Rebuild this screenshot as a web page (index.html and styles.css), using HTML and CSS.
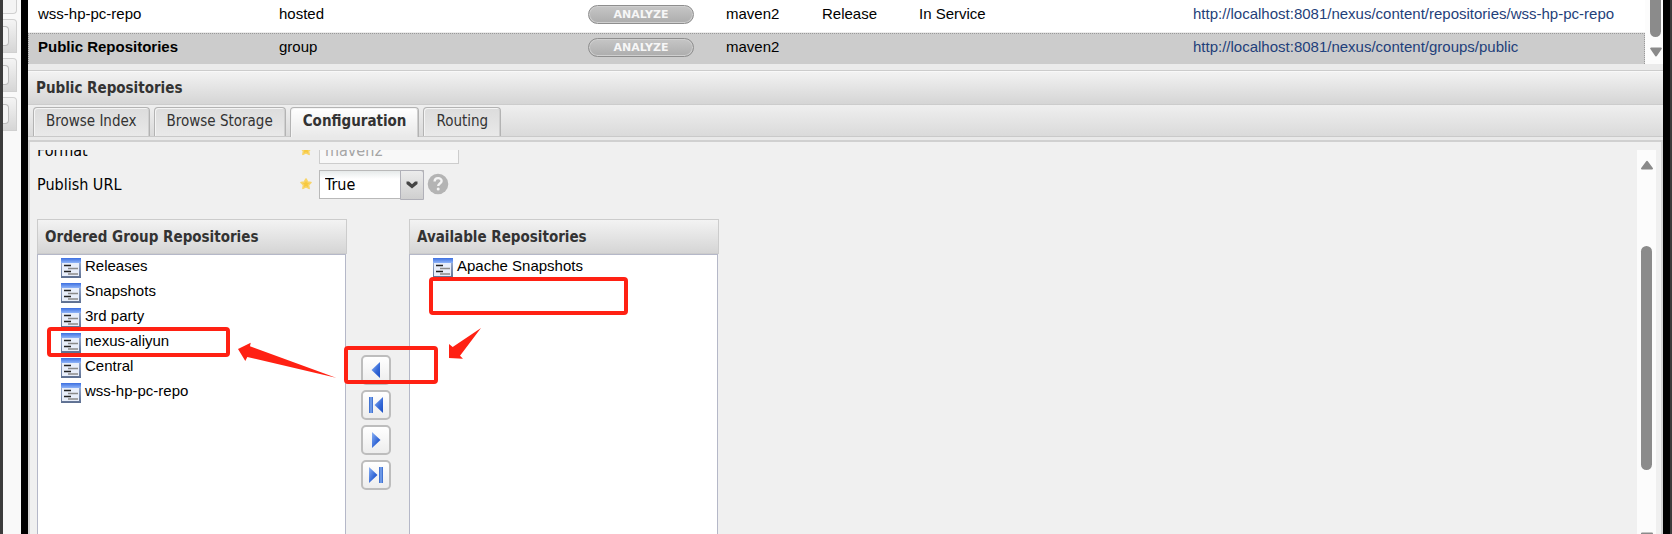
FILE: index.html
```html
<!DOCTYPE html>
<html lang="en">
<head>
    <meta charset="UTF-8">
    <meta name="viewport" content="width=device-width, initial-scale=1.0">
    <title>Nexus Repository Manager</title>
    <link rel="stylesheet" href="styles.css">
</head>
<body>

    <!-- shared icons -->
    <svg class="defs" width="0" height="0">
        <defs>
            <linearGradient id="blue" x1="0" y1="0" x2="1" y2="1">
                <stop offset="0" stop-color="#8db4f5"/>
                <stop offset="0.6" stop-color="#3367d6"/>
                <stop offset="1" stop-color="#1c4fc4"/>
            </linearGradient>
            <linearGradient id="bar" x1="0" y1="0" x2="1" y2="0">
                <stop offset="0" stop-color="#2f62c8"/>
                <stop offset="0.5" stop-color="#7fa9f0"/>
                <stop offset="1" stop-color="#2f62c8"/>
            </linearGradient>
            <linearGradient id="cap" x1="0" y1="0" x2="0" y2="1">
                <stop offset="0" stop-color="#3c6fe0"/>
                <stop offset="1" stop-color="#8fb4f8"/>
            </linearGradient>
            <linearGradient id="edge" x1="0" y1="0" x2="0" y2="1">
                <stop offset="0" stop-color="#a9bbe0"/>
                <stop offset="1" stop-color="#5d6f90"/>
            </linearGradient>
        </defs>
        <symbol id="repo" viewBox="0 0 20 20">
            <rect width="20" height="20" fill="url(#edge)"/>
            <rect x="1" y="5" width="17" height="13" fill="#e8eefa"/>
            <rect x="0" y="0" width="20" height="5" fill="url(#cap)"/>
            <path d="M3 7.5h7M3 13.5h7" stroke="#222" stroke-width="1.6"/>
            <path d="M7 10.5h10M7 16h10" stroke="#8a8a8a" stroke-width="1.4"/>
        </symbol>
        <symbol id="star" viewBox="0 0 12 12">
            <path d="M6 1l1.6 3 3.4 0.5-2.5 2.4 0.6 3.5L6 8.9l-3.1 1.5 0.6-3.5L1 4.5l3.4-0.5z" fill="#f7c93e" stroke="#f8d468" stroke-width="1.6" stroke-linejoin="round"/>
        </symbol>
    </svg>

    <div class="window">
        <aside class="sidebar">
            <div class="side-box short"></div>
            <div class="side-box"><span></span></div>
            <div class="side-box"><span></span></div>
            <div class="side-box"><span></span></div>
        </aside>

        <main class="main">
            <div class="grid">
                <table class="repos">
                    <colgroup>
                        <col class="c-name"><col class="c-type"><col class="c-health"><col class="c-format">
                        <col class="c-policy"><col class="c-status"><col>
                    </colgroup>
                    <tbody>
                        <tr>
                            <td>wss-hp-pc-repo</td>
                            <td>hosted</td>
                            <td><button type="button" class="analyze">ANALYZE</button></td>
                            <td>maven2</td>
                            <td>Release</td>
                            <td>In Service</td>
                            <td><a href="#">http://localhost:8081/nexus/content/repositories/wss-hp-pc-repo</a></td>
                        </tr>
                        <tr class="selected">
                            <td>Public Repositories</td>
                            <td>group</td>
                            <td><button type="button" class="analyze">ANALYZE</button></td>
                            <td>maven2</td>
                            <td></td>
                            <td></td>
                            <td><a href="#">http://localhost:8081/nexus/content/groups/public</a></td>
                        </tr>
                    </tbody>
                </table>
                <div class="scrollbar grid-scroll">
                    <div class="thumb"></div>
                    <svg width="12" height="10" viewBox="0 0 12 10"><path d="M1.2 1.5h9.6L6 8.5z" fill="#8a8a8a" stroke="#8a8a8a" stroke-width="2" stroke-linejoin="round"/></svg>
                </div>
            </div>

            <section class="details">
                <h1 class="panel-title">Public Repositories</h1>
                <nav class="tabs">
                    <button type="button" class="tab">Browse Index</button>
                    <button type="button" class="tab">Browse Storage</button>
                    <button type="button" class="tab active">Configuration</button>
                    <button type="button" class="tab">Routing</button>
                </nav>

                <div class="panel">
                    <form class="config">
                        <div class="field">
                            <label for="format">Format</label>
                            <svg class="star" width="12" height="12"><use href="#star"/></svg>
                            <input type="text" id="format" value="maven2" disabled>
                        </div>
                        <div class="field">
                            <label for="publish">Publish URL</label>
                            <svg class="star" width="12" height="12"><use href="#star"/></svg>
                            <div class="combo">
                                <select id="publish">
                                    <option selected>True</option>
                                    <option>False</option>
                                </select>
                                <span class="trigger">
                                    <svg width="12" height="8" viewBox="0 0 12 8"><path d="M0.5 0.5H3L6 3.2 9 0.5h2.5V3L6 7.5 0.5 3z" fill="#444"/></svg>
                                </span>
                            </div>
                            <svg class="help" width="22" height="22" viewBox="0 0 22 22">
                                <circle cx="11" cy="11" r="10.3" fill="#b4b4b4"/>
                                <path d="M7.6 8.6c0-4.6 7-4.4 7-0.6 0 2.5-3.4 2.5-3.4 5" fill="none" stroke="#f4f4f4" stroke-width="2.4"/>
                                <circle cx="11.2" cy="16" r="1.5" fill="#f4f4f4"/>
                            </svg>
                        </div>

                        <div class="picker">
                            <div class="list">
                                <h2>Ordered Group Repositories</h2>
                                <ul>
                                    <li><svg width="20" height="20"><use href="#repo"/></svg>Releases</li>
                                    <li><svg width="20" height="20"><use href="#repo"/></svg>Snapshots</li>
                                    <li><svg width="20" height="20"><use href="#repo"/></svg>3rd party</li>
                                    <li><svg width="20" height="20"><use href="#repo"/></svg>nexus-aliyun</li>
                                    <li><svg width="20" height="20"><use href="#repo"/></svg>Central</li>
                                    <li><svg width="20" height="20"><use href="#repo"/></svg>wss-hp-pc-repo</li>
                                </ul>
                            </div>
                            <div class="movers">
                                <button type="button" aria-label="Add">
                                    <svg width="16" height="16" viewBox="0 0 16 16"><path d="M12 0v16L3.5 8z" fill="url(#blue)"/></svg>
                                </button>
                                <button type="button" aria-label="Add all">
                                    <svg width="16" height="16" viewBox="0 0 16 16"><rect x="1" y="0" width="4" height="16" fill="url(#bar)"/><path d="M15 0v16L6.5 8z" fill="url(#blue)"/></svg>
                                </button>
                                <button type="button" aria-label="Remove">
                                    <svg width="16" height="16" viewBox="0 0 16 16"><path d="M4 0v16l8.5-8z" fill="url(#blue)"/></svg>
                                </button>
                                <button type="button" aria-label="Remove all">
                                    <svg width="16" height="16" viewBox="0 0 16 16"><path d="M1 0v16l8.5-8z" fill="url(#blue)"/><rect x="11" y="0" width="4" height="16" fill="url(#bar)"/></svg>
                                </button>
                            </div>
                            <div class="list">
                                <h2>Available Repositories</h2>
                                <ul>
                                    <li><svg width="20" height="20"><use href="#repo"/></svg>Apache Snapshots</li>
                                </ul>
                            </div>
                        </div>
                    </form>
                    <div class="scrollbar panel-scroll">
                        <svg width="14" height="10" viewBox="0 0 14 10"><path d="M2 8.5h10L7 1.8z" fill="#8a8a8a" stroke="#8a8a8a" stroke-width="2" stroke-linejoin="round"/></svg>
                        <div class="thumb"></div>
                        <svg width="14" height="10" viewBox="0 0 14 10"><path d="M2 1.5h10L7 8.2z" fill="#8a8a8a" stroke="#8a8a8a" stroke-width="2" stroke-linejoin="round"/></svg>
                    </div>
                </div>
            </section>
        </main>
    </div>

    <!-- red markup over the move buttons and lists -->
    <svg class="notes" width="700" height="400" viewBox="0 0 700 400">
        <g fill="none" stroke="#ff2113" stroke-width="4">
            <rect x="49" y="329" width="179" height="26" rx="2"/>
            <rect x="431" y="279" width="195" height="34" rx="2"/>
            <rect x="346" y="348" width="90" height="34" rx="2"/>
        </g>
        <g fill="#ff2113">
            <path d="M238 349L250.7 342.7 250 346.3 336 377.7 247.3 357 245.3 361z"/>
            <path d="M481 328L460 355.7 463 358.7 449 358 449 344 452.7 347z"/>
        </g>
    </svg>

</body>
</html>
```
FILE: styles.css
```css
* {
    margin: 0;
    padding: 0;
    box-sizing: border-box;
}

body {
    font-family: "Liberation Sans", Arial, sans-serif;
    font-size: 15px;
    color: #000;
    background: #3c3c3c;
    overflow: hidden;
}

.defs {
    position: absolute;
}

.window {
    display: flex;
    height: 100vh;
    padding: 0 2px 0 3px;
}

/* left navigation */
.sidebar {
    width: 18px;
    background: #f9f9f9;
    overflow: hidden;
}

.side-box {
    display: flex;
    align-items: center;
    width: 14px;
    height: 34px;
    margin-bottom: 5px;
    border: 1px solid #d0d0d0;
    border-left: none;
    border-radius: 0 4px 0 0;
    background: linear-gradient(#f4f4f4, #d6d6d6);
}

.side-box.short {
    height: 14px;
    border-top: none;
    border-radius: 0 0 4px 0;
    background: #f4f4f4;
}

.side-box span {
    width: 6px;
    height: 20px;
    border: 1px solid #bbb;
    border-left: none;
    border-radius: 0 4px 4px 0;
    background: #f4f4f4;
}

.main {
    flex: 1;
    min-width: 0;
    display: flex;
    flex-direction: column;
    border: solid #000;
    border-width: 0 7px;
    background: #ebebeb;
}

/* repository grid */
.grid {
    display: flex;
    height: 64px;
    margin-bottom: 6px;
    background: #fff;
    overflow: hidden;
}

.repos {
    flex: 1;
    min-width: 0;
    table-layout: fixed;
    border-collapse: separate;
    border-spacing: 0;
}

.c-name { width: 240px; }
.c-type { width: 309px; }
.c-health { width: 138px; }
.c-format { width: 96px; }
.c-policy { width: 97px; }
.c-status { width: 274px; }

.repos td {
    height: 33px;
    padding: 4px 0 0 11px;
    line-height: 20px;
    vertical-align: top;
    white-space: nowrap;
    border-bottom: 1px solid #ededed;
}

.repos .selected {
    outline: 1px dotted #999;
    outline-offset: -1px;
}

.repos .selected td {
    background: #ccc;
}

.repos .selected td:first-child {
    font-weight: bold;
}

.repos td:first-child {
    padding-left: 10px;
}

.repos a {
    color: #1f3f7a;
    text-decoration: none;
}

.analyze {
    display: block;
    width: 106px;
    height: 19px;
    margin-top: 1px;
    font: bold 11px/15px "DejaVu Sans", Verdana, sans-serif;
    color: #f6f6f6;
    border: 1px solid #8e8e8e;
    border-radius: 10px;
    background: linear-gradient(#c6c6c6, #adadad);
    box-shadow: inset 0 0 0 1px #cfcfcf;
}

/* scrollbars */
.scrollbar {
    display: flex;
    flex-direction: column;
    align-items: center;
    flex: none;
    background: #fcfcfc;
}

.thumb {
    width: 11px;
    background: #8b8b8b;
}

.grid-scroll {
    width: 18px;
    padding-left: 3px;
}

.grid-scroll .thumb {
    height: 37px;
    margin-bottom: 10px;
    border-radius: 0 0 6px 6px;
}

/* details panel */
.details {
    flex: 1;
    min-height: 0;
    display: flex;
    flex-direction: column;
}

.panel-title,
.tab,
.field,
.list h2 {
    font-family: "DejaVu Sans Condensed", Tahoma, sans-serif;
}

.panel-title {
    height: 34px;
    padding-left: 8px;
    font-size: 15px;
    line-height: 34px;
    color: #333;
    border-top: 1px solid #ccc;
    background: linear-gradient(#f3f3f3, #d5d5d5);
    box-shadow: inset 0 1px #f8f8f8;
}

.tabs {
    display: flex;
    gap: 4px;
    height: 38px;
    padding: 2px 5px 0;
    border-top: 1px solid #ccc;
    border-bottom: 2px solid #d0d0d0;
    background: linear-gradient(#efefef, #dadada 31px, #c9c9c9 31px, #c9c9c9 32px, #e9e9e9 32px);
}

.tab {
    height: 29px;
    padding: 0 12px 2px;
    font-size: 15px;
    line-height: 26px;
    color: #333;
    border: solid #b3b3b3;
    border-width: 1px 1px 0;
    border-radius: 4px 4px 0 0;
    background: linear-gradient(#dcdcdc, #e9e9e9);
    box-shadow: inset 1px 1px #f4f4f4, inset -1px 0 #cfcfcf;
}

.tab.active {
    height: 30px;
    padding-bottom: 3px;
    font-weight: bold;
    background: linear-gradient(#fff, #e9e9e9);
}

.panel {
    flex: 1;
    min-height: 0;
    display: flex;
    padding: 8px 5px 0 3px;
    border: solid #d4d4d4;
    border-width: 0 2px;
    background: #f0f0f0;
}

.config {
    flex: 1;
    min-width: 0;
    display: flex;
    flex-direction: column;
    padding-left: 4px;
    overflow: hidden;
}

.field {
    display: flex;
    align-items: center;
    flex: none;
    height: 28px;
    margin-bottom: 6px;
    font-size: 16px;
}

.field:first-child {
    margin-top: -14px;
}

.field label {
    width: 263px;
}

.star {
    margin-right: 7px;
}

.field input,
.field select {
    font: inherit;
    padding-left: 5px;
    border: 1px solid #b9b9b9;
    background: linear-gradient(#e6eaea, #fff 8px);
    appearance: none;
    outline: none;
}

.field input {
    width: 140px;
    height: 28px;
    color: #a5a5a5;
    border-color: #cdcdcd;
    background: #f8f8f8;
}

.combo {
    display: flex;
    position: relative;
}

.combo select {
    width: 105px;
    height: 29px;
    color: #000;
}

.trigger {
    position: absolute;
    top: 0;
    right: 0;
    display: flex;
    align-items: center;
    justify-content: center;
    width: 24px;
    height: 30px;
    border: 1px solid #b0b0b8;
    border-radius: 0 3px 0 0;
    background: linear-gradient(#ececec, #cfcfcf);
    pointer-events: none;
}

.help {
    margin-left: 3px;
}

/* ordered / available lists */
.picker {
    flex: 1;
    display: flex;
    margin-top: 15px;
}

.list {
    width: 310px;
    display: flex;
    flex-direction: column;
}

.list h2 {
    height: 35px;
    padding-left: 7px;
    font-size: 15px;
    line-height: 34px;
    color: #333;
    border: 1px solid #ccc;
    background: linear-gradient(#f3f3f3, #d5d5d5);
}

.list ul {
    flex: 1;
    min-height: 280px;
    margin-right: 1px;
    padding-left: 23px;
    list-style: none;
    border: solid #b5b8c8;
    border-width: 1px 1px 0;
    background: #fff;
}

.list li {
    display: flex;
    align-items: center;
    gap: 4px;
    height: 25px;
    line-height: 20px;
    padding-bottom: 4px;
}

.list li svg {
    margin-top: 4px;
    flex: none;
}

.movers {
    display: flex;
    flex-direction: column;
    align-items: center;
    gap: 5px;
    width: 62px;
    padding: 136px 4px 0 0;
}

.movers button {
    display: flex;
    align-items: center;
    justify-content: center;
    width: 30px;
    height: 30px;
    border: 2px solid #bdbdbd;
    border-radius: 5px;
    background: linear-gradient(#fff, #ededed);
}

.panel-scroll {
    width: 19px;
    padding-top: 10px;
}

.panel-scroll .thumb {
    height: 224px;
    margin: 76px 0 62px;
    border-radius: 6px;
    flex: none;
}

.panel-scroll svg {
    flex: none;
}

/* markup layer */
.notes {
    position: absolute;
    top: 0;
    left: 0;
    pointer-events: none;
}
```
